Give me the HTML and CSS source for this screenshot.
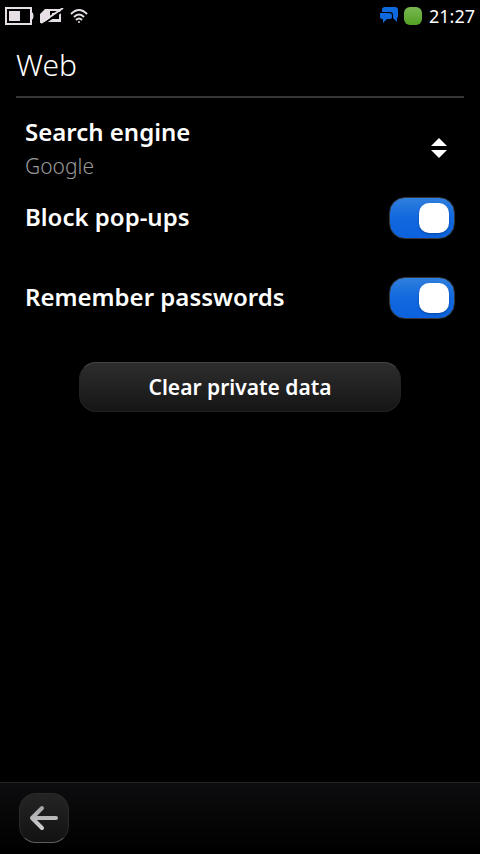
FILE: index.html
```html
<!DOCTYPE html>
<html lang="en">
<head>
<meta charset="utf-8">
<meta name="viewport" content="width=device-width, initial-scale=1">
<title>Web</title>
<link rel="stylesheet" href="styles.css">
</head>
<body>
<div class="status">
  <svg width="29" height="18" viewBox="0 0 29 18" aria-hidden="true">
    <path d="M1 1h25v16H1z" fill="none" stroke="#e6e0e6" stroke-width="2"/>
    <path d="M4 4h11v10H4zM26 5l2 1q1 3 0 6l-2 1z" fill="#e6e0e6"/>
  </svg>
  <svg width="24" height="16" viewBox="0 0 24 16" aria-hidden="true">
    <path d="M0 15V6l5-5h16v13H6z" fill="#e6e0e6"/>
    <path d="M10 3h9v8h-9z" fill="#000"/>
    <path d="M12 5h4l-4 3z" fill="#e6e0e6"/>
    <path d="M3 16L24 2" stroke="#000" stroke-width="2"/>
    <path d="M1 15L23 0" stroke="#e6e0e6" stroke-width="2"/>
  </svg>
  <svg width="20" height="16" viewBox="0 0 20 16" aria-hidden="true">
    <path d="M1 6Q9-2 17 6M4 9Q9 4 14 9M6 12Q9 9 12 12" fill="none" stroke="#e6e0e6" stroke-width="2"/>
    <circle cx="9" cy="14" r="1" fill="#e6e0e6"/>
  </svg>
  <span class="spacer"></span>
  <svg width="18" height="18" viewBox="0 0 18 18" aria-hidden="true">
    <path d="M5 0h10q3 0 3 3v6q0 2-1 2v4l-4-4V8q0-3-3-3H2V3q0-3 3-3z" fill="#0f68dc"/>
    <path d="M0 6h9q3 0 3 3v1q0 2-2 2H7l-4 4v-4H2q-2 0-2-2z" fill="#0f68dc"/>
  </svg>
  <span class="presence"></span>
  <time class="clock">21:27</time>
</div>
<header class="title"><h1>Web</h1></header>
<main class="settings">
  <div class="row picker">
    <label for="engine">Search engine</label>
    <select id="engine"><option>Google</option></select>
    <svg class="arrows" width="16" height="20" viewBox="0 0 16 20" aria-hidden="true">
      <path d="M8 0l8 8H0zM0 12h16l-8 8z" fill="#fff"/>
    </svg>
  </div>
  <div class="row">
    <label for="popups">Block pop-ups</label>
    <input class="switch" type="checkbox" role="switch" id="popups" checked>
  </div>
  <div class="row">
    <label for="passwords">Remember passwords</label>
    <input class="switch" type="checkbox" role="switch" id="passwords" checked>
  </div>
  <button class="clear" type="button">Clear private data</button>
</main>
<footer class="toolbar">
  <button class="back" type="button" aria-label="Back">
    <svg width="30" height="26" viewBox="0 0 30 26" aria-hidden="true">
      <defs><linearGradient id="metal" gradientUnits="userSpaceOnUse" x1="0" y1="0" x2="0" y2="26"><stop stop-color="#a0a0a4"/><stop offset="1" stop-color="#d2d2d4"/></linearGradient></defs>
      <path d="M13 3L3 13l10 10M3 13h24" fill="none" stroke="url(#metal)" stroke-width="4" stroke-linecap="round" stroke-linejoin="round"/>
    </svg>
  </button>
</footer>
</body>
</html>
```
FILE: styles.css
```css
* { box-sizing: border-box; }
body {
  margin: 0;
  min-height: 100vh;
  display: flex;
  flex-direction: column;
  background: #000;
  color: #fff;
  font-family: "Noto Sans", "Open Sans", sans-serif;
}
.status {
  display: flex;
  align-items: center;
  gap: 6px;
  height: 32px;
  padding: 0 5px;
}
.status svg { flex: none; }
.spacer { flex: 1; }
.presence {
  width: 18px;
  height: 18px;
  border-radius: 6px;
  background: linear-gradient(#79b853, #52a022);
}
.clock {
  padding-left: 1px;
  font-size: 18px;
  line-height: 32px;
}
.title {
  height: 66px;
  margin: 0 16px;
  border-bottom: 2px solid #363636;
}
h1 {
  margin: 0;
  font-size: 30px;
  font-weight: 300;
  line-height: 66px;
}
.settings {
  flex: 1;
  display: flex;
  flex-direction: column;
  padding: 0 25px;
}
.row {
  display: flex;
  align-items: center;
  justify-content: space-between;
  height: 80px;
  font-size: 24px;
  font-weight: 600;
}
.row label { padding-bottom: 4px; }
.picker {
  display: grid;
  grid-template-columns: 1fr 16px;
  grid-template-rows: 36px 32px;
  align-content: start;
  padding: 16px 8px 0 0;
}
.picker label {
  padding: 0;
  line-height: 36px;
}
.picker select {
  grid-row: 2;
  appearance: none;
  height: 32px;
  border: 0;
  padding: 0;
  background: transparent;
  color: #989898;
  font: 300 21px "Noto Sans", "Open Sans", sans-serif;
}
.arrows {
  grid-column: 2;
  grid-row: 1 / 3;
  align-self: center;
  pointer-events: none;
}
.switch {
  appearance: none;
  display: flex;
  align-items: center;
  flex: none;
  width: 66px;
  height: 42px;
  margin: 0;
  padding: 5px;
  border: 1px solid #34373d;
  border-radius: 16px;
  background: linear-gradient(#307fdd, #1168df 50%, #0b62dc);
}
.switch::before {
  content: "";
  width: 30px;
  height: 30px;
  border-radius: 10px;
  background: #fff;
  box-shadow: 0 1px 2px #0845a0;
}
.switch:checked::before { margin-left: auto; }
.clear {
  align-self: center;
  width: 322px;
  max-width: 100%;
  height: 50px;
  margin-top: 24px;
  border: 1px solid #222;
  border-top-color: #444;
  border-radius: 17px;
  background: linear-gradient(#2d2d2d, #151515);
  color: #fff;
  font: 600 21px "Noto Sans", "Open Sans", sans-serif;
}
.toolbar {
  height: 72px;
  padding: 10px 19px;
  border-top: 1px solid #242424;
  background: linear-gradient(#0d0c0e, #000);
}
.back {
  display: grid;
  place-items: center;
  width: 50px;
  height: 50px;
  padding: 0;
  border: 1px solid #2a2a2a;
  border-bottom-color: #606060;
  border-radius: 17px;
  background: linear-gradient(#242424, #121212);
}
```
